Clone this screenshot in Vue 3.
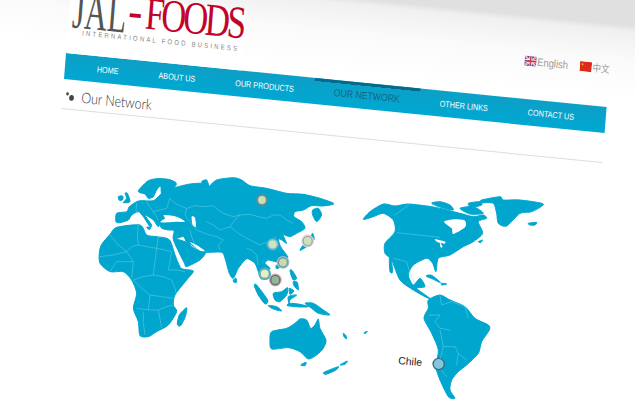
<template>
  <div class="stage">
    <div class="sheet">
      <div class="top">
        <div class="logo">
          <div class="logo-name">
            <span class="jal">JAL</span>
            <span class="dash">-</span>
            <span class="foods">FOODS</span>
          </div>
          <div class="logo-sub">INTERNATIONAL FOOD BUSINESS</div>
        </div>
        <div class="langs">
          <a class="lang">
            <svg width="14" height="10" viewBox="0 0 14 10">
              <rect width="14" height="10" fill="#34408f" />
              <path d="M0 0L14 10M14 0L0 10" stroke="#fff" stroke-width="2" />
              <path d="M0 0L14 10M14 0L0 10" stroke="#d2344a" stroke-width=".7" />
              <path d="M7 0V10M0 5H14" stroke="#fff" stroke-width="3.4" />
              <path d="M7 0V10M0 5H14" stroke="#d2344a" stroke-width="1.8" />
            </svg>
            English
          </a>
          <a class="lang">
            <svg width="14" height="10" viewBox="0 0 14 10">
              <rect width="14" height="10" fill="#de2a1c" />
              <circle cx="3" cy="3" r="1.1" fill="#f3a32a" />
            </svg>
            中文
          </a>
        </div>
      </div>
      <nav class="nav">
        <a v-for="item in menu" :key="item" class="nav-item" :class="{ active: item === 'OUR NETWORK' }">{{ item }}</a>
      </nav>
      <div class="title">
        <svg class="bullet" width="12" height="12" viewBox="0 0 12 12">
          <circle cx="2.5" cy="2.5" r="1.6" fill="#444" />
          <circle cx="7.5" cy="6" r="2.8" fill="#444" />
        </svg>
        <h1>Our Network</h1>
      </div>
    </div>

    <svg class="map" width="635" height="400" viewBox="0 0 635 400">
      <g transform="translate(90 165) scale(.3333)">
        <path v-for="(d, i) in eastLand" :key="i" :d="smooth(d)" class="land" />
        <path v-for="(d, i) in eastSeas" :key="i" :d="smooth(d)" fill="#fff" />
        <path v-for="(d, i) in eastBorders" :key="i" :d="d" class="border" />
      </g>
      <g transform="translate(350 190) scale(.3333)">
        <path v-for="(d, i) in westLand" :key="i" :d="smooth(d)" class="land" />
        <path v-for="(d, i) in westSeas" :key="i" :d="smooth(d)" fill="#fff" />
        <path v-for="(d, i) in westBorders" :key="i" :d="d" class="border" />
      </g>
      <g v-for="m in markers" :key="m.x">
        <circle :cx="m.x" :cy="m.y" r="6.4" :fill="m.halo" />
        <circle :cx="m.x" :cy="m.y" r="5.2" :fill="m.ring" />
        <circle :cx="m.x" :cy="m.y" r="3.9" :fill="m.dot" />
      </g>
      <circle cx="438.7" cy="364" r="5.6" fill="#86c6dd" stroke="#3a6f82" stroke-width="1.4" />
      <text x="398" y="364" class="label" transform="rotate(5 398 364)">Chile</text>
    </svg>
  </div>
</template>

<script setup>
const menu = ['HOME', 'ABOUT US', 'OUR PRODUCTS', 'OUR NETWORK', 'OTHER LINKS', 'CONTACT US']

// coordinates are in 3x crop pixels, the groups scale them back down
const eastLand = [
  'M140 110L155 107 190 107 210 90 230 75 265 65 300 57 340 55 352 68 380 45 430 38 455 45 480 62 530 70 590 85 640 88 690 100 732 116 700 123 665 122 640 135 615 140 612 155 635 170 645 190 620 205 600 215 580 210 590 235 575 225 565 222 572 245 590 270 592 280 560 290 535 285 525 295 540 310 530 318 515 342 505 320 495 295 475 282 465 285 445 310 430 340 418 325 405 280 395 262 350 262 335 258 305 240 290 232 280 215 250 222 252 197 235 195 215 190 210 175 215 165 205 185 190 165 165 150 185 180 180 185 160 155 145 140 125 150 115 165 90 173 78 170 80 145 110 140 118 125Z',
  'M145 77L160 60 175 47 200 41 235 43 258 53 255 65 230 78 215 88 212 63 200 75 190 95 175 100 165 87 150 83Z',
  'M28 262L35 238 60 208 80 187 150 180 170 210 200 215 238 224 256 272 274 310 310 318 290 345 255 390 250 420 260 440 235 480 200 500 175 515 150 512 145 470 130 430 140 385 125 345 100 320 60 320 30 295Z',
  'M251 222L290 232 305 245 325 255 347 262 330 285 290 305 284 296 265 258Z',
  'M262 478L268 450 290 428 286 455 272 482Z',
  'M493 362L500 360 533 405 525 417 505 390Z',
  'M535 422L560 425 575 438 550 432Z',
  'M550 385L575 380 593 368 590 390 570 410 555 405Z',
  'M595 395L620 390 600 405 598 420Z',
  'M600 315L608 318 620 340 610 345 603 330ZM610 350L622 352 625 375 612 362Z',
  'M645 415L670 415 700 435 720 450 685 445 665 430Z',
  'M545 500L590 490 615 475 630 462 650 465 662 490 675 480 685 462 690 490 708 525 700 550 680 570 655 582 630 560 595 548 545 552 540 525Z',
  'M632 600L648 592 645 602Z',
  'M702 622L745 605 738 615 708 628ZM750 600L772 588 765 598Z',
  'M668 135L685 130 695 150 680 170 668 150Z',
  'M630 256L640 240 662 215 668 205 672 225 650 245Z',
  'M85 95L98 93 98 104 88 106ZM105 85L112 85 120 110 100 113 110 100Z',
  'M335 50L350 45 358 70 345 62Z',
  'M170 187L182 187 178 194Z',
  'M430 345L438 340 440 352 432 352Z',
  'M592 422L630 426 655 425 630 418 600 415ZM760 505L768 512 770 522 762 515Z',
  'M598 370L612 378 600 388Z',
  'M560 300L568 308 558 310Z'
]
const eastSeas = [
  'M222 150L260 155 285 170 260 170 212 172 225 160Z',
  'M305 155L315 158 318 185 308 180Z',
  'M300 232L320 240 345 258 328 256Z'
]
const eastBorders = [
  'M240 100L255 115 290 130 315 122 340 125 370 122 385 135 400 145 430 155 450 150 480 148 505 155 530 160 550 150 570 150 590 165 610 175',
  'M290 130L285 150 295 165 320 195 345 205 360 210 380 215 400 225',
  'M350 170L370 180 390 195 420 185 435 165 450 150M420 185L445 205 470 220 490 230 510 240 535 230 560 215',
  'M470 250L485 255 500 270 505 300M400 225L385 240 390 255M300 195L305 215 315 240',
  'M140 115L138 135 145 150M170 110L178 125 190 140 210 135 230 130 240 100M190 140L205 165',
  'M60 210L85 240 110 260 125 245 145 240 170 245 200 250 225 255 245 260M145 180L142 210 145 240M205 215L200 250M245 260L240 290 235 315',
  'M30 275L70 270 110 260 120 275 130 290 125 340M60 320L80 290 130 290M200 250L195 290 190 330 160 335 130 345M235 315L260 315 285 320',
  'M190 330L220 335 245 345 255 370 260 390M130 345L155 370 180 390 215 395 250 400M140 430L175 435 205 435 230 425 250 420M180 390L175 435M165 510L160 475 160 440M205 435L215 490'
]
const westLand = [
  'M40 88L60 65 100 42 135 48 175 42 245 50 290 60 330 70 370 80 400 75 410 85 385 95 398 130 370 155 340 170 300 195 265 205 258 245 248 220 230 205 190 225 175 255 190 285 210 265 225 290 200 295 240 325 225 320 190 300 150 270 125 210 105 190 105 160 135 125 130 90 100 70 70 80Z',
  'M245 40L270 35 300 45 310 60 280 55ZM355 40L390 35 395 45 365 52ZM330 55L370 50 400 70 360 72Z',
  'M395 30L450 20 460 30 510 30 580 42 545 65 510 70 470 108 445 100 440 70 430 40 395 38Z',
  'M535 100L560 97 555 105 540 105Z',
  'M118 205L123 205 128 245 120 245Z',
  'M228 258L245 256 272 278 250 268Z',
  'M275 280L290 282 275 285ZM385 155L398 150 392 158Z',
  'M235 330L270 315 300 330 345 350 375 385 415 405 418 420 395 455 385 490 350 525 325 545 305 570 300 600 315 625 295 620 270 570 258 530 265 480 245 430 222 385 235 355Z',
  'M42 428L52 424 46 431Z'
]
const westSeas = [
  'M282 95L315 88 345 92 345 112 310 132 305 115Z',
  'M255 148L285 155 283 161 262 156ZM270 158L278 170 272 172Z'
]
const westBorders = [
  'M135 75L178 44M140 128L205 135 270 142',
  'M130 205L170 215 180 250 195 280',
  'M270 318L275 345 305 335 345 350 355 385M235 375L270 375 255 395 270 415 300 420',
  'M270 420L280 470 315 470 325 490 350 510M280 470L265 530 290 560M325 490L320 525'
]
const markers = [
  { x: 262, y: 200, halo: '#3b95ad', ring: '#6e8a94', dot: '#c9e0b6' },
  { x: 272.7, y: 244.3, halo: '#3eacc9', ring: '#7fc4da', dot: '#cfe6b6' },
  { x: 283, y: 262.3, halo: '#9cc0cc', ring: '#7d979c', dot: '#c3dcb0' },
  { x: 307.7, y: 241, halo: '#d9d6da', ring: '#a8a6a9', dot: '#cbe2bb' },
  { x: 264.7, y: 273.7, halo: '#3fb0cc', ring: '#7fa9b0', dot: '#e2f2ba' },
  { x: 275.3, y: 280, halo: '#d8a6ae', ring: '#5f6e6c', dot: '#8fb89a' }
]

// rounds the traced polygons into closed catmull-rom curves
function smooth (d) {
  return d.split('M').filter(Boolean).map(sub => {
    const n = sub.replace(/[LZ]/g, ' ').trim().split(/\s+/).map(Number)
    const p = []
    for (let i = 0; i < n.length; i += 2) p.push([n[i], n[i + 1]])
    let out = `M${p[0][0]} ${p[0][1]}`
    const len = p.length
    for (let i = 0; i < len; i++) {
      const p0 = p[(i - 1 + len) % len]
      const p1 = p[i]
      const p2 = p[(i + 1) % len]
      const p3 = p[(i + 2) % len]
      const c1x = p1[0] + (p2[0] - p0[0]) / 8
      const c1y = p1[1] + (p2[1] - p0[1]) / 8
      const c2x = p2[0] - (p3[0] - p1[0]) / 8
      const c2y = p2[1] - (p3[1] - p1[1]) / 8
      out += `C${c1x} ${c1y} ${c2x} ${c2y} ${p2[0]} ${p2[1]}`
    }
    return out + 'Z'
  }).join('')
}
</script>

<style scoped>
.stage {
  display: grid;
  width: 635px;
  height: 400px;
  overflow: hidden;
  background: linear-gradient(185.7deg, #e0e0e0 0, #e0e0e0 26px, #f0f0f0 32px, #fafafa 60px, #fff 100px);
}
.sheet {
  grid-area: 1 / 1;
  width: 636px;
  height: 130px;
  transform-origin: 0 0;
  transform: matrix(.85, .085, -.078, 1, 70.7, -7);
  font-family: "Liberation Sans", Arial, sans-serif;
}
.map {
  grid-area: 1 / 1;
  display: block;
}
.top {
  display: flex;
  justify-content: space-between;
  align-items: flex-end;
  height: 60px;
}
.logo {
  width: 206px;
  height: 60px;
  padding-left: 4px;
  box-sizing: border-box;
  background: #fff;
}
.logo-name {
  display: flex;
  align-items: baseline;
  height: 34px;
  margin-top: -7px;
  font-family: "Liberation Serif", serif;
  line-height: 34px;
}
.jal {
  display: inline-block;
  font-size: 54px;
  color: #555;
  transform: translateY(6px) scaleX(.68);
  transform-origin: 0 0;
  margin-right: -34px;
}
.dash {
  font-size: 50px;
  color: #c0042b;
  margin-left: 6px;
}
.foods {
  display: inline-block;
  font-size: 46px;
  color: #c0042b;
  letter-spacing: -4px;
  transform: scaleX(.88);
  transform-origin: 0 0;
  margin-left: 3px;
  margin-right: -16px;
}
.logo-sub {
  margin: 8px 0 0 13px;
  font-size: 7px;
  letter-spacing: 2.6px;
  color: #888;
  white-space: nowrap;
}
.langs {
  display: flex;
  gap: 14px;
  padding-bottom: 31px;
  font-size: 11px;
  color: #999;
}
.lang {
  display: flex;
  align-items: center;
  gap: 1px;
}
.lang:last-child {
  font-family: "Noto Sans CJK SC", sans-serif;
  font-size: 10px;
}
.nav {
  display: flex;
  height: 26px;
  padding-left: 14px;
  background: linear-gradient(#0d9fc6, #00a8d2);
}
.nav-item {
  padding: 0 23.5px;
  font-size: 8.5px;
  line-height: 26px;
  color: #fff;
  white-space: nowrap;
}
.nav-item.active {
  font-size: 10.2px;
  color: #15658a;
  background: linear-gradient(#06688a 3px, transparent 3px);
}
.title {
  display: flex;
  align-items: center;
  gap: 7px;
  height: 30px;
  padding-top: 3px;
  box-sizing: border-box;
  border-bottom: 1px solid #ddd;
}
.bullet {
  margin-left: 3px;
  margin-top: 3px;
}
.title h1 {
  margin: 0;
  font-family: Lato, sans-serif;
  font-size: 14.6px;
  font-weight: 300;
  color: #333;
}
.land {
  fill: #00a6ce;
  stroke: #00a6ce;
  stroke-width: 3;
  stroke-linejoin: round;
}
.border {
  fill: none;
  stroke: #7fd4ea;
  stroke-width: 1.8;
  stroke-opacity: .75;
}
.label {
  font-family: "Liberation Sans", Arial, sans-serif;
  font-size: 10.5px;
  fill: #222;
}
</style>
